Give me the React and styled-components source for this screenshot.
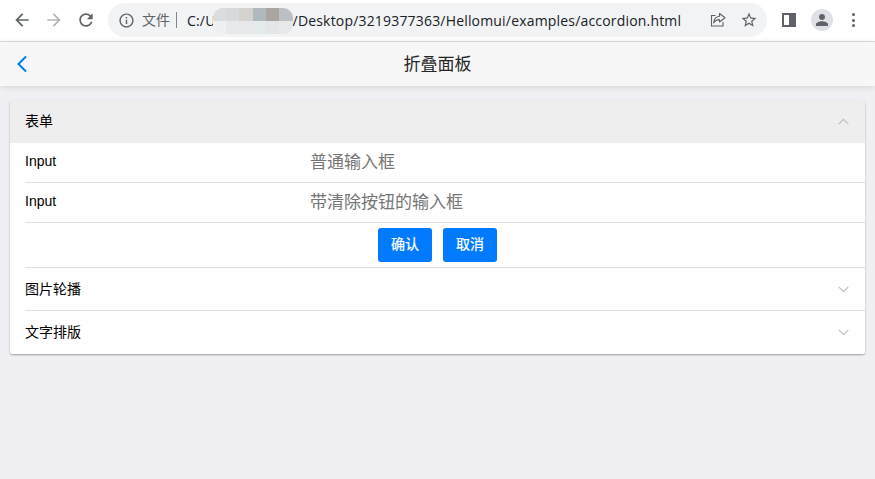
import React from "react";
import styled, { createGlobalStyle } from "styled-components";

const Global = createGlobalStyle`
  html, body { margin: 0; padding: 0; height: 100%; background: #efeff4; }
  #root { height: 100%; }
  * { box-sizing: border-box; }
`;

const CJK = `"Liberation Sans", "Noto Sans CJK SC", sans-serif`;

const Page = styled.div`
  width: 875px;
  height: 479px;
  overflow: hidden;
  background: #efeff4;
  font-family: ${CJK};
`;

const Chrome = styled.div`
  height: 42px;
  display: flex;
  align-items: center;
  background: #fff;
  border-bottom: 1px solid #dcdde0;
  padding: 0 0 1px 12px;
`;

const NavButton = styled.div`
  width: 20px;
  height: 20px;
  margin-right: ${(p) => p.$gap}px;
  display: flex;
  align-items: center;
  justify-content: center;
  flex: none;
  svg { display: block; fill: ${(p) => p.$color || "#5f6368"}; }
`;

const Omnibox = styled.div`
  width: 659px;
  height: 34px;
  margin-left: 2px;
  border-radius: 17px;
  background: #f1f3f4;
  display: flex;
  align-items: center;
  padding-left: 10px;
  flex: none;
`;

const InfoIcon = styled.svg`
  width: 17px;
  height: 17px;
  fill: #5f6368;
  flex: none;
`;

const Scheme = styled.span`
  margin-left: 7px;
  font: 14px "Noto Sans CJK SC", sans-serif;
  color: #5f6368;
  width: 35px;
  border-right: 1px solid #80868b;
  height: 16px;
  line-height: 15px;
  flex: none;
`;

const Url = styled.div`
  margin-left: 10px;
  font: 14px "Open Sans", sans-serif;
  letter-spacing: 0.18px;
  color: #202124;
  display: flex;
  align-items: center;
  flex: none;
  white-space: nowrap;
`;

const Smudge = styled.div`
  width: 80px;
  height: 26px;
  margin: 1px 0 0 -3px;
  display: grid;
  grid-template-columns: repeat(6, 1fr);
  grid-template-rows: 1fr 1fr;
  border-radius: 10px;
  overflow: hidden;
  background: #e6e8ea;
  flex: none;
`;

const SmudgeCell = styled.span`
  background: ${(p) => p.$c};
  filter: blur(0.6px);
`;

const OmniActions = styled.div`
  margin-left: auto;
  display: flex;
  align-items: center;
  gap: 14px;
  padding-right: 9px;
  svg { display: block; flex: none; }
`;

const PanelIcon = styled.div`
  width: 14px;
  height: 14px;
  margin-left: 15px;
  border: 2px solid #5f6368;
  border-right-width: 7px;
  background: #fff;
  flex: none;
`;

const Avatar = styled.div`
  width: 22px;
  height: 22px;
  margin-left: 15px;
  border-radius: 50%;
  background: #dee1e6;
  display: flex;
  align-items: center;
  justify-content: center;
  flex: none;
`;

const Dots = styled.div`
  margin-left: 19px;
  display: flex;
  flex-direction: column;
  gap: 2.5px;
  flex: none;
`;

const Dot = styled.span`
  width: 3px;
  height: 3px;
  border-radius: 50%;
  background: #5f6368;
`;

const Bar = styled.header`
  height: 44px;
  background: #f7f7f7;
  box-shadow: 0 1px 6px rgba(0, 0, 0, 0.12);
  display: grid;
  grid-template-columns: 44px 1fr 44px;
  align-items: center;
  position: relative;
`;

const BackLink = styled.div`
  padding-left: 16px;
  display: flex;
  align-items: center;
  svg { display: block; }
`;

const Title = styled.h1`
  margin: 0;
  padding-bottom: 4px;
  text-align: center;
  font-weight: 400;
  font-size: 17px;
  color: #262626;
`;

const Card = styled.section`
  margin: 14px 10px 0;
  background: #fff;
  border-radius: 3px;
  box-shadow: 0 1px 2px rgba(0, 0, 0, 0.35);
  overflow: hidden;
`;

const Head = styled.div`
  height: ${(p) => p.$h}px;
  margin-left: ${(p) => p.$inset || 0}px;
  display: flex;
  align-items: center;
  justify-content: space-between;
  padding: 0 16px 0 15px;
  font-size: 14px;
  color: #000;
  background: ${(p) => (p.$open ? "#eeeeee" : "#fff")};
`;

const HeadText = styled.span`
  padding-bottom: ${(p) => p.$lift}px;
`;

const Chevron = styled.svg`
  width: 11px;
  height: 7px;
  fill: none;
  stroke: #bdbdc2;
  stroke-width: 1.1;
  flex: none;
`;

const Divided = styled.div`
  margin-left: 15px;
  border-bottom: 1px solid #e0e0e0;
`;

const InputRow = styled.div`
  height: 39px;
  margin-left: -15px;
  display: grid;
  grid-template-columns: 33.33% 1fr;
  align-items: center;
`;

const Label = styled.label`
  padding: 0 0 3px 15px;
  font-size: 14px;
  color: #000;
`;

const Field = styled.input`
  border: 0;
  outline: 0;
  width: 100%;
  padding: 0 15px;
  background: transparent;
  font: 17px ${CJK};
  color: #000;
  &::placeholder { color: #757575; opacity: 1; }
`;

const Actions = styled.div`
  height: 44px;
  margin-left: -15px;
  display: flex;
  justify-content: center;
  align-items: flex-start;
  padding-top: 5px;
  gap: 11px;
`;

const Btn = styled.button`
  width: 54px;
  height: 34px;
  padding: 0 0 4px;
  border: 0;
  border-radius: 3px;
  background: #007aff;
  color: #fff;
  font: 14px ${CJK};
  -webkit-text-stroke: 0.25px #fff;
`;

const DownChevron = () => (
  <Chevron viewBox="0 0 11 7"><path d="M.7.8l4.8 4.8L10.3.8" /></Chevron>
);

export default function App() {
  const cells = ["#dbdcdd", "#d8d9da", "#d3d2cf", "#b0babd", "#aaa5a1", "#bcc0c4", "#eef0f1", "#e8e9ea", "#e6e8ea", "#e4e9ec", "#e3e5e7", "#e6e8ea"];
  return (
    <Page>
      <Global />
      <Chrome>
        <NavButton $gap={12}>
          <svg width="20" height="20" viewBox="0 0 24 24"><path d="M20 11H7.830l5.590-5.590L12 4l-8 8 8 8 1.410-1.410L7.830 13H20v-2z" /></svg>
        </NavButton>
        <NavButton $gap={12} $color="#b4b6b9">
          <svg width="20" height="20" viewBox="0 0 24 24"><path d="M4 11h12.170l-5.590-5.590L12 4l8 8-8 8-1.410-1.410L16.170 13H4v-2z" /></svg>
        </NavButton>
        <NavButton $gap={10}>
          <svg width="20" height="20" viewBox="0 0 24 24"><path d="M17.65 6.35C16.2 4.9 14.21 4 12 4c-4.42 0-7.99 3.58-7.99 8s3.57 8 7.99 8c3.73 0 6.84-2.55 7.73-6h-2.08c-.82 2.33-3.04 4-5.65 4-3.31 0-6-2.69-6-6s2.69-6 6-6c1.66 0 3.14.69 4.22 1.78L13 11h7V4l-2.35 2.35z" /></svg>
        </NavButton>
        <Omnibox>
          <InfoIcon viewBox="0 0 24 24"><path d="M11 7h2v2h-2zm0 4h2v6h-2zm1-9C6.48 2 2 6.48 2 12s4.48 10 10 10 10-4.48 10-10S17.52 2 12 2zm0 18c-4.41 0-8-3.59-8-8s3.59-8 8-8 8 3.59 8 8-3.59 8-8 8z" /></InfoIcon>
          <Scheme>文件</Scheme>
          <Url>
            <span>C:/U</span>
            <Smudge>{cells.map((c, i) => <SmudgeCell key={i} $c={c} />)}</Smudge>
            <span>/Desktop/3219377363/Hellomui/examples/accordion.html</span>
          </Url>
          <OmniActions>
            <svg width="16" height="16" viewBox="0 0 16 16" fill="none" stroke="#5f6368" strokeWidth="1.1">
              <path d="M5.500 3.500H1.500v10.500h11.500V10" />
              <path d="M9.500 1.500l5.500 4.300-5.500 4.200V7.600C7 7.600 5 8.600 3.700 11c.3-3.600 2.500-6.400 5.800-6.700V1.500z" strokeLinejoin="round" />
            </svg>
            <svg width="18" height="18" viewBox="0 0 24 24" fill="#5f6368"><path d="M22 9.240l-7.190-.62L12 2 9.190 8.630 2 9.240l5.460 4.730L5.820 21 12 17.270 18.180 21l-1.630-7.030L22 9.240zM12 15.400l-3.760 2.270 1-4.280-3.320-2.880 4.380-.38L12 6.100l1.710 4.040 4.380.38-3.320 2.880 1 4.280L12 15.400z" /></svg>
          </OmniActions>
        </Omnibox>
        <PanelIcon />
        <Avatar>
          <svg width="16" height="16" viewBox="0 0 24 24" fill="#5f6368"><path d="M12 12c2.700 0 4.500-1.900 4.500-4.500S14.700 3 12 3 7.500 4.900 7.500 7.500 9.300 12 12 12zm0 2c-3.300 0-9 1.700-9 4.500V21h18v-2.500c0-2.800-5.700-4.500-9-4.500z" /></svg>
        </Avatar>
        <Dots><Dot /><Dot /><Dot /></Dots>
      </Chrome>
      <Bar>
        <BackLink>
          <svg width="12" height="18" viewBox="0 0 12 18" fill="none" stroke="#007aff" strokeWidth="2"><path d="M10 1.500L2.500 9l7.500 7.500" /></svg>
        </BackLink>
        <Title>折叠面板</Title>
        <span />
      </Bar>
      <Card>
        <Head $open $h={43}>
          <HeadText $lift={4}>表单</HeadText>
          <Chevron viewBox="0 0 11 7"><path d="M.7 6.200L5.500 1.400l4.800 4.800" /></Chevron>
        </Head>
        <Divided>
          <InputRow>
            <Label>Input</Label>
            <Field placeholder="普通输入框" />
          </InputRow>
        </Divided>
        <Divided>
          <InputRow>
            <Label>Input</Label>
            <Field placeholder="带清除按钮的输入框" />
          </InputRow>
        </Divided>
        <Divided>
          <Actions>
            <Btn>确认</Btn>
            <Btn>取消</Btn>
          </Actions>
        </Divided>
        <Divided>
          <Head $h={42} $inset={-15}>
            <HeadText $lift={2}>图片轮播</HeadText>
            <DownChevron />
          </Head>
        </Divided>
        <Head $h={43}>
          <HeadText $lift={4}>文字排版</HeadText>
          <DownChevron />
        </Head>
      </Card>
    </Page>
  );
}
